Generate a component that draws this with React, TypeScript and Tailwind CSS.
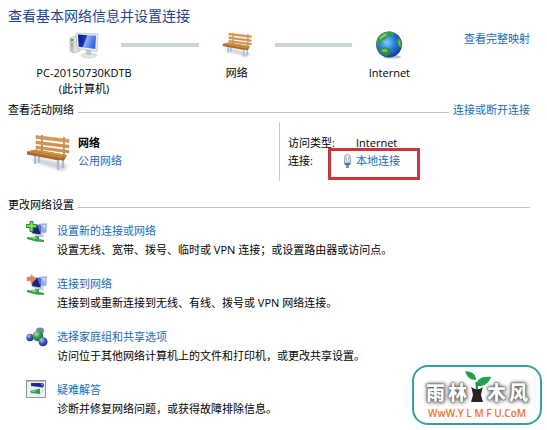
import type { ReactNode } from "react";

interface Task {
  title: string;
  description: string;
  icon: ReactNode;
}

function ComputerIcon() {
  return (
    <svg viewBox="0 0 30 27" className="h-[27px] w-[30px]" aria-hidden="true">
      <defs>
        <linearGradient id="pc-screen" x1="0" y1="0" x2="1" y2="0.3">
          <stop offset="0" stopColor="#0a1a8e" />
          <stop offset="0.45" stopColor="#1532c0" />
          <stop offset="0.52" stopColor="#8db4f8" />
          <stop offset="1" stopColor="#3a63e0" />
        </linearGradient>
      </defs>
      <path d="M1 6 L6 4 L11 5 V19 L5 21 L1 19 Z" fill="#dfe2e2" stroke="#b0b4b4" strokeWidth="0.6" />
      <path d="M1 6 L5 7 V21 L1 19 Z" fill="#c0c5c5" />
      <circle cx="3" cy="8" r="1.300" fill="#3fae4a" />
      <path d="M2 12h2M2 14h2" stroke="#777" strokeWidth="0.6" />
      <ellipse cx="20" cy="23.500" rx="8" ry="2.400" fill="#e3e6e6" stroke="#b9bdbd" strokeWidth="0.5" />
      <path d="M17 17 L22 18 V23 H17 Z" fill="#bfc4c4" />
      <path d="M7 1 L29 2 L28 19.500 L8 16.500 Z" fill="#eceeef" stroke="#a9adaf" strokeWidth="0.6" />
      <path d="M9 2.500 L27 3.700 L26.300 17 L9.700 14.800 Z" fill="url(#pc-screen)" />
    </svg>
  );
}

function BenchIcon({ className }: { className: string }) {
  return (
    <svg viewBox="0 0 44 38" className={className} aria-hidden="true">
      <defs>
        <filter id="bench-shadow" x="-20%" y="-50%" width="140%" height="200%">
          <feGaussianBlur stdDeviation="1.600" />
        </filter>
      </defs>
      <path d="M5 27 L37 37 L42 31 L12 24 Z" fill="#b9bcc6" opacity="0.7" filter="url(#bench-shadow)" />
      <path d="M16 1v19M38 3v20" stroke="#a3a8b0" strokeWidth="2" />
      <path d="M10 1.500 L43 5.500 L43 8.500 L10 4.500 Z" fill="#dc9a50" stroke="#b16e28" strokeWidth="0.4" />
      <path d="M10 7 L43 11.300 L43 14 L10 9.800 Z" fill="#d6944a" stroke="#b16e28" strokeWidth="0.4" />
      <path d="M10 12 L43 16.500 L43 19 L10 14.500 Z" fill="#d6944a" stroke="#b16e28" strokeWidth="0.4" />
      <path d="M9 21v9M13 22v7M32 26v10M37 25v9" stroke="#a9b9d2" strokeWidth="2.200" />
      <path d="M1 17.500 L10 15.500 L41 21 L38 26.500 L30 26 L1 20.500 Z" fill="#a8692a" />
      <path d="M1 17.500 L10 15.500 L41 21 L36 24 Z" fill="#d7974a" />
      <path d="M5 16.800 L38 22.700" stroke="#a4641f" strokeWidth="0.7" />
    </svg>
  );
}

function GlobeIcon() {
  return (
    <svg viewBox="0 0 28 28" className="h-7 w-7" aria-hidden="true">
      <defs>
        <radialGradient id="globe-sea" cx="0.42" cy="0.42" r="0.6">
          <stop offset="0" stopColor="#7fd0ff" />
          <stop offset="0.45" stopColor="#2f86e0" />
          <stop offset="1" stopColor="#123c92" />
        </radialGradient>
      </defs>
      <ellipse cx="17" cy="26" rx="9" ry="1.600" fill="#bcc2cc" />
      <circle cx="14" cy="13.500" r="13" fill="url(#globe-sea)" />
      <path
        d="M8 2 C12 0 16 0 19 2 L18 5 L16 3.500 L15 6 L12 4.500 L11 8 L7 9 L6 12 L3 15 L1.500 13 C1.500 8 4 4 8 2 Z"
        fill="#3f9a45"
      />
      <path d="M9 3 L12 2 L11 5 L7 7 L5 9 L5 6 Z" fill="#86cf62" />
      <path d="M23 6 L26 10 C27 13 27 15 26 17 L23 15 L22 11 Z" fill="#43a046" />
      <path d="M24 9 L25 12 L24 14 Z" fill="#a2dc74" />
      <path d="M5 18 L10 16 L15 18 L16 21 L12 25 C9 25 6 23 4 20 Z" fill="#2e8f3e" />
      <path d="M6 19 L10 17.500 L13 19 L12 21 L8 21 Z" fill="#6cc452" />
    </svg>
  );
}

function PlugIcon() {
  return (
    <svg viewBox="0 0 9 14" className="h-[14px] w-[9px]" aria-hidden="true">
      <path d="M2 1.500 L4.500 0.500 L7 1.500 L7.500 9 H1.500 Z" fill="#eef4f8" stroke="#7690a4" strokeWidth="0.9" />
      <path d="M3.500 3v5M5.500 3v5" stroke="#9bb2c2" strokeWidth="0.7" />
      <path d="M1.500 9h6v2h-6z" fill="#5d7485" />
      <path d="M3 11h3v3H3z" fill="#58a2c8" />
    </svg>
  );
}

function LinkedScreens({ children }: { children: ReactNode }) {
  return (
    <svg viewBox="0 0 22 22" className="h-[22px] w-[22px]" aria-hidden="true">
      <path d="M13 3 L21 2.500 L20 12 L13 12 Z" fill="#8ca8ec" stroke="#c4cde0" strokeWidth="0.8" />
      <path d="M16 4 L19.500 4 L19 9 Z" fill="#c9dbff" />
      <path d="M5 3.500 L15 4 L15 14 L6 12.500 Z" fill="#17247f" stroke="#b7c0cf" strokeWidth="0.8" />
      <path d="M11.500 4.500 L14.500 4.700 L14.500 13 Z" fill="#5877d8" />
      <path d="M11 14 L17 13 L18 16 H12 Z" fill="#c2ccd0" />
      <path d="M1 16 L9 17 V14.500 L13 15.500 V18 L18 19 V21 L10 20.500 L1 18 Z" fill="#2fa04c" />
      <path d="M4 16 L9 15.500 L12 17 L8 18.500 Z" fill="#7bcf8c" />
      {children}
    </svg>
  );
}

function HomegroupIcon() {
  return (
    <svg viewBox="0 0 22 20" className="h-5 w-[22px]" aria-hidden="true">
      <defs>
        <radialGradient id="ball-blue" cx="0.35" cy="0.3" r="0.7">
          <stop offset="0" stopColor="#b5c9f5" />
          <stop offset="0.5" stopColor="#4264bd" />
          <stop offset="1" stopColor="#1a2f83" />
        </radialGradient>
        <radialGradient id="ball-green" cx="0.35" cy="0.3" r="0.7">
          <stop offset="0" stopColor="#a5e6a2" />
          <stop offset="0.5" stopColor="#3aa14c" />
          <stop offset="1" stopColor="#1d6c33" />
        </radialGradient>
      </defs>
      <path d="M4 11 L12 9 L17 15 M12 9 L14 3" stroke="#8c9fae" strokeWidth="2" fill="none" />
      <ellipse cx="14" cy="3.800" rx="4" ry="3.300" fill="#6c8ba9" />
      <circle cx="4" cy="10.500" r="3.700" fill="url(#ball-blue)" />
      <circle cx="12" cy="9" r="5.300" fill="url(#ball-green)" />
      <circle cx="17" cy="14.800" r="4.500" fill="url(#ball-blue)" />
    </svg>
  );
}

function TroubleshootIcon() {
  return (
    <svg viewBox="0 0 20 18" className="h-[18px] w-5" aria-hidden="true">
      <rect x="0.500" y="0.500" width="19" height="17" fill="#edf1f2" stroke="#8d9698" />
      <path d="M1 1h18v1H1z" fill="#b8c0c2" />
      <path d="M5 3 L17 3 L18 5 L17 7.500 L5 6 Z" fill="#1c2a91" />
      <path d="M14 3.500 L17 3.500 L17 6.500 Z" fill="#6e86dd" />
      <path d="M4 11 L14 8.500 L14 14 L5 13 Z" fill="#2f9c50" />
      <path d="M5 11.500 L11 10 L8 12.500 Z" fill="#79d08c" />
      <path d="M13 15.500 L18 9" stroke="#c5cdcf" />
    </svg>
  );
}

const tasks: Task[] = [
  {
    title: "设置新的连接或网络",
    description: "设置无线、宽带、拨号、临时或 VPN 连接；或设置路由器或访问点。",
    icon: (
      <LinkedScreens>
        <path d="M4 0.500h3v3h3.500v3H7v4H4v-4H0.500v-3H4z" fill="#7ddd62" stroke="#258a2c" strokeWidth="1" />
      </LinkedScreens>
    ),
  },
  {
    title: "连接到网络",
    description: "连接到或重新连接到无线、有线、拨号或 VPN 网络连接。",
    icon: (
      <LinkedScreens>
        <path d="M1 3h4V0.500L10 5 5 9.500V7H1z" fill="#ec8147" stroke="#c5a08a" strokeWidth="0.600" />
      </LinkedScreens>
    ),
  },
  {
    title: "选择家庭组和共享选项",
    description: "访问位于其他网络计算机上的文件和打印机，或更改共享设置。",
    icon: <HomegroupIcon />,
  },
  {
    title: "疑难解答",
    description: "诊断并修复网络问题，或获得故障排除信息。",
    icon: <TroubleshootIcon />,
  },
];

function TextLink({ children }: { children: ReactNode }) {
  return (
    <a href="#" className="whitespace-nowrap text-[#1a6ab5] hover:underline">
      {children}
    </a>
  );
}

function SectionHeader({ title, action }: { title: string; action?: ReactNode }) {
  return (
    <div className="flex items-center gap-1">
      <h2>{title}</h2>
      <div className="mt-1 h-px flex-1 bg-[#bfc3c6]" />
      {action}
    </div>
  );
}

function SiteBadge() {
  return (
    <div className="absolute right-[5px] bottom-[5px] flex h-[60px] w-[130px] flex-col items-center justify-end rounded-2xl border-2 border-[#3a9f9c] bg-white pb-[2px]">
      <div className="flex items-center gap-[3px] text-[19px] leading-6 font-black text-white [text-shadow:0_0_1px_#333,0_0_2px_#666,0_0_3px_#777,0_0_4px_#888,1px_1px_5px_#888]">
        <span>雨</span>
        <span>林</span>
        <svg viewBox="0 0 30 36" className="-mx-2 -mt-3 h-9 w-[30px]" aria-hidden="true">
          <path d="M9 18 L13 20 L18 20 L21 18 L20 21 L19 26 L21 33 H9 L11 26 L10 21 Z" fill="#26241f" />
          <path d="M14 21 L13.500 13 L15.500 13 L16 21 Z" fill="#23803c" />
          <path d="M3 2 C9 3 14 4 14 11 C8 11 5 8 3 2 Z" fill="#23a04a" />
          <path d="M15 17 C14 10 20 7 29 8 C27 14 22 18 15 17 Z" fill="#23a04a" />
        </svg>
        <span>木</span>
        <span>风</span>
      </div>
      <div className="text-[10px] leading-4 font-semibold whitespace-nowrap text-[#ee741f]">WwW.Y L M F U.CoM</div>
    </div>
  );
}

export default function App() {
  return (
    <main className="relative min-h-screen bg-white pt-1 pr-[17px] pb-3 pl-2 font-['Open_Sans','Noto_Sans_CJK_SC',sans-serif] text-[11px] leading-4 text-black">
      <h1 className="text-[14px] leading-6 text-[#1c4394]">查看基本网络信息并设置连接</h1>

      {/* Network map: icons on the first row, their names below */}
      <div className="mt-px ml-[39px] grid grid-cols-[74px_3fr_76px_3fr_74px_4fr] items-center justify-items-center">
        <ComputerIcon />
        <div className="h-1 w-full bg-[#c9d5d9]" />
        <BenchIcon className="h-[26px] w-[30px]" />
        <div className="h-1 w-full bg-[#c9d5d9]" />
        <div className="flex h-8 items-center">
          <GlobeIcon />
        </div>
        <div className="mb-3 justify-self-end">
          <TextLink>查看完整映射</TextLink>
        </div>

        <div className="col-start-1 mt-1 flex h-8 flex-col items-center self-start whitespace-nowrap">
          <span>PC-20150730KDTB</span>
          <span>(此计算机)</span>
        </div>
        <div className="col-start-3 mt-1 self-start">网络</div>
        <div className="col-start-5 mt-1 self-start">Internet</div>
      </div>

      <section className="mt-[5px]">
        <SectionHeader title="查看活动网络" action={<TextLink>连接或断开连接</TextLink>} />
        <div className="mt-1 grid grid-cols-[271px_1fr]">
          <div className="flex items-start gap-2 pt-3 pl-[18px]">
            <BenchIcon className="h-[38px] w-11" />
            <div className="leading-[18px]">
              <div className="font-bold">网络</div>
              <TextLink>公用网络</TextLink>
            </div>
          </div>
          <dl className="grid h-[59px] grid-cols-[55px_1fr] content-start border-l border-[#c4c8ca] pt-3 pl-2 leading-[18px]">
            <dt className="whitespace-nowrap">访问类型:</dt>
            <dd className="pl-[13px]">Internet</dd>
            <dt>连接:</dt>
            <dd className="relative flex items-center gap-1">
              <PlugIcon />
              <TextLink>本地连接</TextLink>
              <div className="pointer-events-none absolute -top-1 -left-[15px] h-8 w-[92px] border-[3px] border-[#c9373d]" />
            </dd>
          </dl>
        </div>
      </section>

      <section className="mt-4">
        <SectionHeader title="更改网络设置" />
        <ul className="mt-2 flex flex-col gap-[15px] pl-[18px]">
          {tasks.map((task) => (
            <li key={task.title} className="flex gap-2 leading-[19px]">
              <div className="flex w-[23px] shrink-0 items-start">{task.icon}</div>
              <div>
                <TextLink>{task.title}</TextLink>
                <p>{task.description}</p>
              </div>
            </li>
          ))}
        </ul>
      </section>

      <SiteBadge />
    </main>
  );
}
